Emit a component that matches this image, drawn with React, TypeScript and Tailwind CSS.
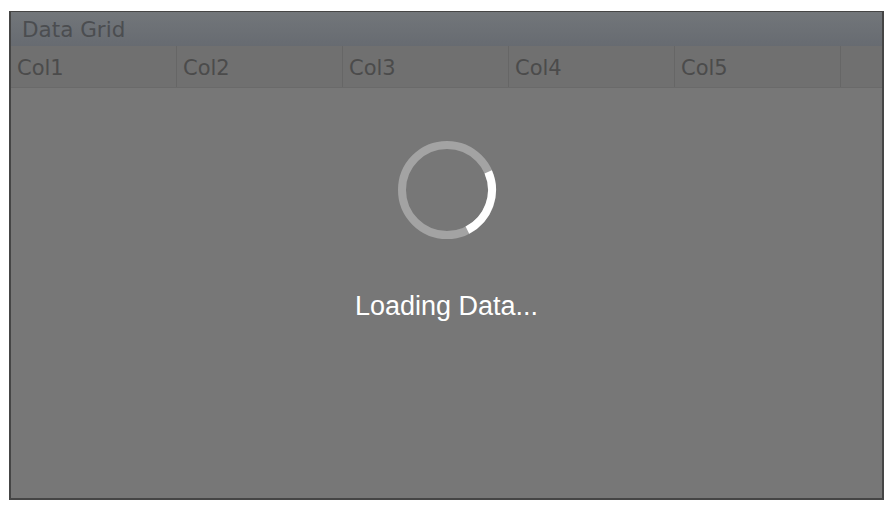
import React from "react";

export default function App() {
  const cols = ["Col1", "Col2", "Col3", "Col4", "Col5"];
  return (
    <div className="w-[894px] h-[511px] bg-white pt-[11px] pl-[9px]">
      <div className="w-[875px] h-[489px] flex flex-col border-[#454545] border-l-2 border-r-2 border-t border-b-2 bg-[#777777] overflow-hidden">
        <div
          className="h-[34px] shrink-0 flex items-center pl-[11px] pt-[2px] text-[21.5px] text-[#4b4d50] bg-gradient-to-b from-[#72767a] to-[#676b71]"
          style={{ fontFamily: '"DejaVu Sans", Verdana, sans-serif' }}
        >
          Data Grid
        </div>
        <div
          className="h-[42px] shrink-0 flex border-b border-[#6a6a6a] bg-[#707070] text-[21px] text-[#4b4b4b]"
          style={{ fontFamily: '"DejaVu Sans", Verdana, sans-serif' }}
        >
          {cols.map((c) => (
            <div key={c} className="w-[166px] shrink-0 border-r border-[#666666] flex items-center pl-[6px] pt-[4px]">
              {c}
            </div>
          ))}
          <div className="flex-1" />
        </div>
        <div className="flex-1 flex flex-col items-center pt-[52px]">
          <svg width="100" height="100" viewBox="0 0 100 100" className="ml-[1px]">
            <circle cx="50" cy="50" r="45" fill="none" stroke="#a3a3a3" strokeWidth="8" />
            <path
              d="M 91.2 31.9 A 45 45 0 0 1 70.4 90.1"
              fill="none"
              stroke="#ffffff"
              strokeWidth="8"
            />
          </svg>
          <div
            className="mt-[53px] text-[27px] leading-none text-white"
            style={{ fontFamily: '"Liberation Sans", Arial, sans-serif' }}
          >
            Loading Data...
          </div>
        </div>
      </div>
    </div>
  );
}
